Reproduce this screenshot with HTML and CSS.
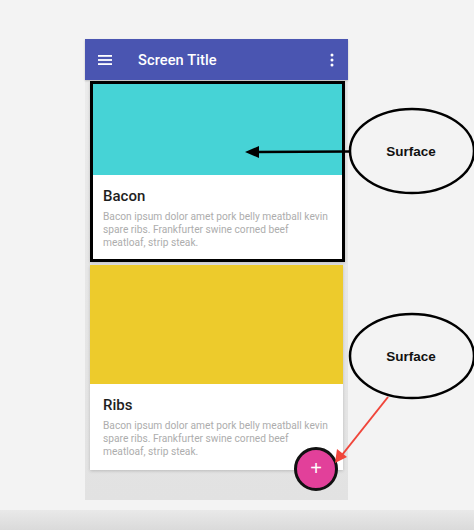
FILE: index.html
```html
<!DOCTYPE html>
<html>
<head>
<meta charset="utf-8">
<link rel="stylesheet" href="styles.css">
</head>
<body>
<div class="page">
  <div class="phone">
    <header class="appbar">
      <svg class="icon-menu" width="14" height="12" viewBox="0 0 14 12"><rect x="0" y="1" width="14" height="1.8" fill="#fff"/><rect x="0" y="5.1" width="14" height="1.8" fill="#fff"/><rect x="0" y="9.2" width="14" height="1.8" fill="#fff"/></svg>
      <h1 class="title">Screen Title</h1>
      <svg class="icon-more" width="4" height="14" viewBox="0 0 4 14"><circle cx="2" cy="2" r="1.5" fill="#fff"/><circle cx="2" cy="7" r="1.5" fill="#fff"/><circle cx="2" cy="12" r="1.5" fill="#fff"/></svg>
    </header>
    <div class="content">
      <article class="card card-outlined">
        <div class="media media-cyan"></div>
        <div class="card-body">
          <h2 class="card-title">Bacon</h2>
          <p class="card-text">Bacon ipsum dolor amet pork belly meatball kevin spare ribs. Frankfurter swine corned beef meatloaf, strip steak.</p>
        </div>
      </article>
      <article class="card card-plain">
        <div class="media media-yellow"></div>
        <div class="card-body">
          <h2 class="card-title">Ribs</h2>
          <p class="card-text">Bacon ipsum dolor amet pork belly meatball kevin spare ribs. Frankfurter swine corned beef meatloaf, strip steak.</p>
        </div>
      </article>
    </div>
    <button class="fab">+</button>
  </div>
  <div class="footer-bar"></div>
  <svg class="annotations" width="474" height="530" viewBox="0 0 474 530">
    <ellipse cx="412" cy="151" rx="62" ry="42" fill="none" stroke="#000" stroke-width="2.5"/>
    <text x="411" y="156" class="ann-label" text-anchor="middle">Surface</text>
    <line x1="350" y1="151.5" x2="256" y2="152" stroke="#000" stroke-width="2.5"/>
    <polygon points="245,152 259,146 259,158" fill="#000"/>
    <ellipse cx="412" cy="356" rx="62" ry="42" fill="none" stroke="#000" stroke-width="2.5"/>
    <text x="411" y="361" class="ann-label" text-anchor="middle">Surface</text>
    <line x1="388" y1="397" x2="342" y2="455" stroke="#f0453a" stroke-width="2"/>
    <polygon points="335,463 337,449 347,457" fill="#f0453a"/>
  </svg>
</div>
</body>
</html>
```
FILE: styles.css
```css
html, body {
  margin: 0;
  padding: 0;
  background: #f3f3f3;
}
.page {
  position: relative;
  width: 474px;
  height: 530px;
  overflow: hidden;
  padding: 39px 0 0 85px;
  box-sizing: border-box;
  font-family: Roboto, "Liberation Sans", sans-serif;
}
.phone {
  position: relative;
  width: 263px;
  height: 461px;
  background: linear-gradient(#ececec, #e2e2e2);
}
.appbar {
  height: 41px;
  background: #4a55b1;
  display: flex;
  align-items: center;
  padding: 0 14px 0 13px;
  box-sizing: border-box;
  box-shadow: 0 1px 2px rgba(0,0,0,0.2);
  position: relative;
  z-index: 1;
}
.icon-menu { display: block; }
.title {
  margin: 0 0 0 26px;
  color: #fff;
  font-size: 14.6px;
  font-weight: 500;
  flex: 1;
  letter-spacing: 0.1px;
}
.icon-more { display: block; }
.content {
  padding: 1px 0 0 5px;
  display: flex;
  flex-direction: column;
  gap: 3px;
}
.card {
  background: #fff;
  box-shadow: 0 1px 3px rgba(0,0,0,0.18);
}
.card-outlined {
  width: 255px;
  border: 3px solid #000;
  box-sizing: border-box;
}
.card-plain {
  width: 253px;
}
.media-cyan {
  height: 91px;
  background: #46d3d6;
}
.media-yellow {
  height: 119px;
  background: #edcb2c;
}
.card-body {
  padding: 11px 0 0 10px;
}
.card-plain .card-body {
  padding-left: 13px;
  height: 86px;
  box-sizing: border-box;
}
.card-outlined .card-body {
  height: 84px;
  box-sizing: border-box;
}
.card-title {
  margin: 0;
  font-size: 15px;
  line-height: 20px;
  font-weight: 500;
  color: #1e1e1e;
}
.card-text {
  margin: 4px 0 0 0;
  width: 228px;
  font-size: 10.2px;
  line-height: 13px;
  color: #adadad;
}
.fab {
  position: absolute;
  left: 209px;
  top: 408px;
  width: 44px;
  height: 44px;
  border-radius: 50%;
  border: 3px solid #111;
  background: #e2409a;
  color: #fff;
  font-size: 20px;
  font-family: "Liberation Sans", sans-serif;
  line-height: 1;
  padding: 0 0 2px 0;
  box-sizing: border-box;
  z-index: 2;
}
.footer-bar {
  margin: 10px 0 0 -85px;
  width: 474px;
  height: 20px;
  background: linear-gradient(#e9e9e9, #dadada);
}
.annotations {
  position: absolute;
  left: 0;
  top: 0;
  z-index: 3;
}
.ann-label {
  font-family: "Liberation Sans", Arial, sans-serif;
  font-weight: bold;
  font-size: 13.5px;
  fill: #111;
}
```
